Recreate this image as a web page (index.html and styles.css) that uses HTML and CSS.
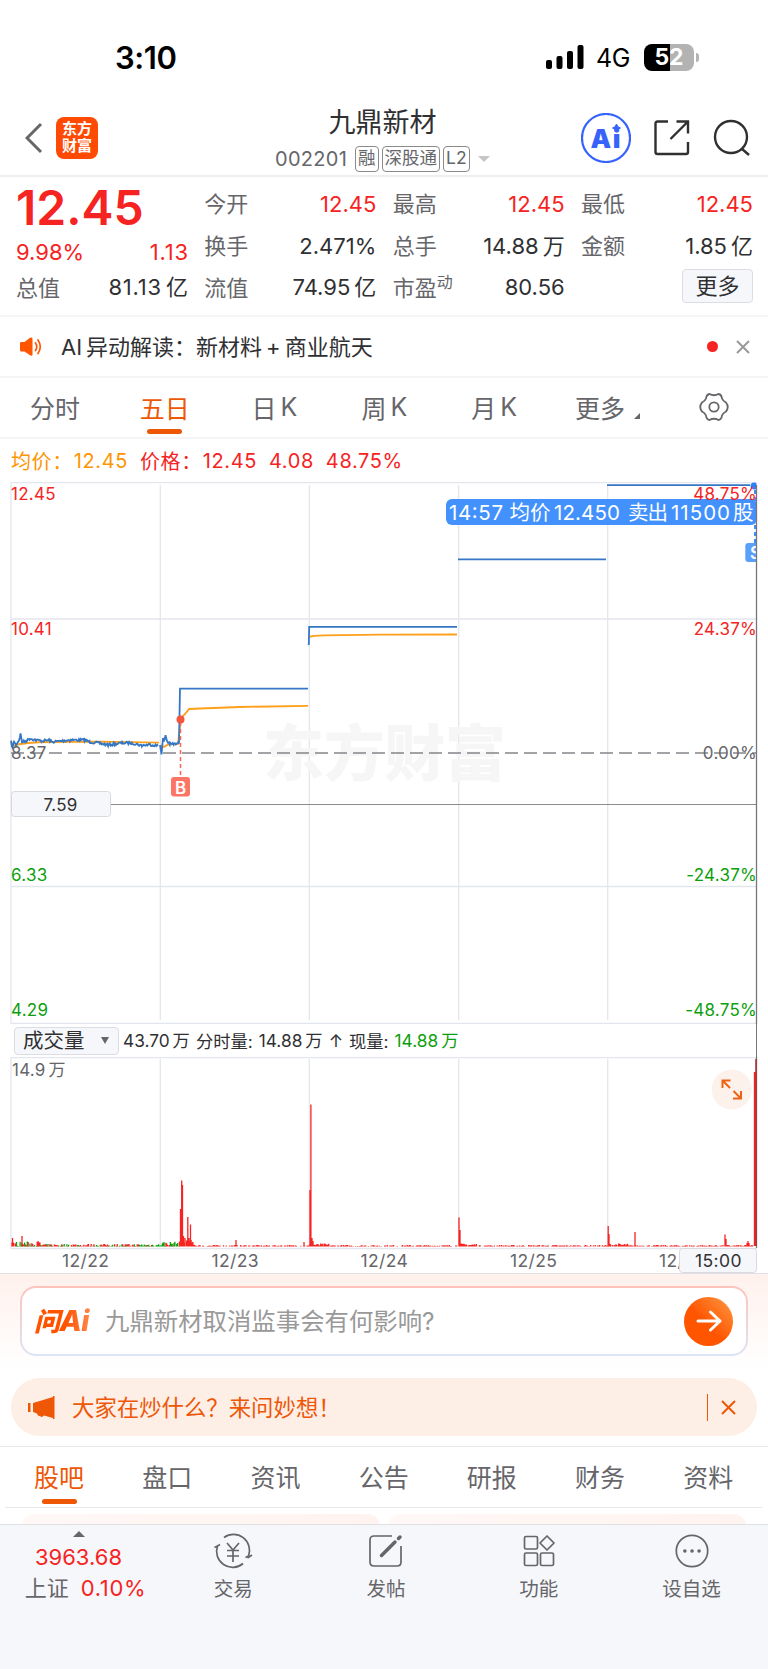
FILE: index.html
```html
<!DOCTYPE html>
<html lang="zh-CN">

<head>
    <meta charset="UTF-8">
    <meta name="viewport" content="width=device-width, initial-scale=1.0">
    <title>九鼎新材 002201</title>
    <link rel="stylesheet" href="styles.css">
</head>

<body>

    <!-- Status bar -->
    <div class="status-bar">
        <span class="clock">3:10</span>
        <div class="status-icons">
            <svg width="38" height="24" viewBox="0 0 38 24">
                <rect x="0" y="15" width="6" height="9" rx="2" />
                <rect x="10.5" y="11" width="6" height="13" rx="2" />
                <rect x="21" y="6" width="6" height="18" rx="2" />
                <rect x="31.5" y="0" width="6" height="24" rx="2" />
            </svg>
            <span class="network">4G</span>
            <span class="battery">52</span>
            <span class="battery-tip"></span>
        </div>
    </div>

    <!-- Header -->
    <header class="header">
        <div class="header-left">
            <svg class="back" width="18" height="32" viewBox="0 0 18 32">
                <path d="M16 2 L2 16 L16 30" />
            </svg>
            <div class="logo">东方<br>财富</div>
        </div>
        <div class="header-title">
            <h1>九鼎新材</h1>
            <div class="stock-code">
                <span class="code">002201</span>
                <span class="tag">融</span>
                <span class="tag">深股通</span>
                <span class="tag">L2</span>
                <span class="caret"></span>
            </div>
        </div>
        <div class="header-right">
            <svg width="50" height="50" viewBox="0 0 50 50">
                <circle cx="25" cy="25" r="24" fill="none" stroke="#3763fb" stroke-width="2.2" />
                <text class="ai-text" x="9.5" y="35" textLength="30">Ai</text>
                <path d="M35.500 11 Q36.300 14.200 39.500 15 Q36.300 15.800 35.500 19 Q34.700 15.800 31.500 15 Q34.700 14.200 35.500 11z" fill="#3763fb" stroke="#3763fb" />
            </svg>
            <svg class="line-icon share" width="38" height="38" viewBox="0 0 38 38">
                <path d="M15 2.500 H4.500 Q2.500 2.500 2.500 4.500 V33 Q2.500 35 4.500 35 H33 Q35 35 35 33 V23" />
                <path d="M23.500 2.500 H35 V14.500 M35 2.500 L17.500 20" />
            </svg>
            <svg class="line-icon" width="38" height="38" viewBox="0 0 38 38">
                <circle cx="18" cy="18" r="16" />
                <path d="M28.500 29.500 L36 36" />
            </svg>
        </div>
    </header>

    <!-- Quote -->
    <section class="quote">
        <div class="quote-col main-col">
            <div class="price">12.45</div>
            <div class="row change"><span>9.98%</span><span class="wide">1.13</span></div>
            <div class="row"><label>总值</label><span class="wide">81.13<i>亿</i></span></div>
        </div>
        <div class="quote-col">
            <div class="row red"><label>今开</label><span>12.45</span></div>
            <div class="row"><label>换手</label><span>2.471%</span></div>
            <div class="row"><label>流值</label><span>74.95<i>亿</i></span></div>
        </div>
        <div class="quote-col">
            <div class="row red"><label>最高</label><span>12.45</span></div>
            <div class="row"><label>总手</label><span>14.88<i>万</i></span></div>
            <div class="row"><label>市盈<sup>动</sup></label><span>80.56</span></div>
        </div>
        <div class="quote-col">
            <div class="row red"><label>最低</label><span>12.45</span></div>
            <div class="row"><label>金额</label><span>1.85<i>亿</i></span></div>
            <div class="row last"><button class="more-btn">更多</button></div>
        </div>
    </section>

    <!-- AI notice -->
    <section class="notice">
        <svg width="24" height="20" viewBox="0 0 24 20">
            <path d="M1 6 Q1 5 2.500 5 H5.500 L11 0.800 Q13.500 0 13.500 2 V17.500 Q13.500 19.500 11 18.300 L5.500 14.500 H2.500 Q1 14.500 1 13.500z" fill="#ff5500" />
            <path d="M16.500 6 Q19 9.700 16.500 13.500 M19 3 Q23.500 9.700 19 16.500" fill="none" stroke="#ff5500" stroke-width="1.700" stroke-linecap="round" />
        </svg>
        <p>AI<i>异动解读：新材料</i><i>+</i><i>商业航天</i></p>
        <span class="dot"></span>
        <svg class="close" width="14" height="14" viewBox="0 0 14 14">
            <path d="M1 1 L13 13 M13 1 L1 13" />
        </svg>
    </section>

    <!-- Period tabs -->
    <nav class="period-tabs">
        <a>分时</a>
        <a class="active">五日</a>
        <a>日<i>K</i></a>
        <a>周<i>K</i></a>
        <a>月<i>K</i></a>
        <a class="more-tab">更多<span class="corner"></span></a>
        <a class="gear">
            <svg width="30" height="30" viewBox="0 0 30 30">
                <path d="M10.500 2 Q15 4.500 19.500 2 Q22.500 2.500 23 6.500 Q24 9 27 10.500 Q30.500 15 27 19.500 Q24 21 23 23.500 Q22.500 27.500 19.500 28 Q15 25.500 10.500 28 Q7.500 27.500 7 23.500 Q6 21 3 19.500 Q-0.500 15 3 10.500 Q6 9 7 6.500 Q7.500 2.500 10.500 2z" />
                <circle cx="15" cy="15" r="4.700" />
            </svg>
        </a>
    </nav>

    <div class="legend">
        <span class="avg">均价：</span>
        <span class="avg avg-value">12.45</span>
        <span class="cur">价格：</span>
        <span>12.45</span>
        <span>4.08</span>
        <span>48.75%</span>
    </div>

    <!-- Price chart -->
    <svg class="chart" width="768" height="542" viewBox="0 482 768 542">
        <g class="grid">
            <path d="M11 482.500 H757 M11 619 H757 M11 886.500 H757 M11 1023.500 H757" />
            <path d="M11 482 V1024 M160.300 485 V1020 M309.300 485 V1020 M458.700 485 V1020 M607.700 485 V1020" />
        </g>
        <text class="watermark" x="263" y="776" textLength="243">东方财富</text>
        <path class="base-line" d="M11 753 H757" />
        <path class="avg-line" id="avgLine" />
        <path class="price-line" id="priceLine" />

        <!-- Buy marker -->
        <path class="buy-line" d="M180.500 722 V777" />
        <circle cx="180.500" cy="719.500" r="4" fill="#f4553f" />
        <rect x="171" y="777" width="19" height="19.500" rx="3" fill="#fd7565" />
        <text class="marker" x="180.500" y="793.500">B</text>

        <!-- Sell marker -->
        <clipPath id="chartClip"><rect x="0" y="482" width="756.500" height="542" /></clipPath>
        <g clip-path="url(#chartClip)">
            <rect x="745.300" y="543" width="19" height="19" rx="3" fill="#5a9ff9" />
            <text class="marker" x="755.500" y="559">S</text>
            <path d="M755 483 V543" stroke="#3d8ffb" stroke-width="2" stroke-dasharray="4 3" />
            <circle cx="754" cy="486" r="3.500" fill="#2d80f5" />
        </g>
        <path d="M110 804.500 H757" stroke="#8c8c8c" />
        <rect x="11.500" y="791.500" width="99" height="25" rx="3" fill="#f6f7fa" stroke="#d8dae0" />
        <text class="axis-label dark" x="43.500" y="811">7.59</text>

        <rect x="446" y="499" width="311" height="26" rx="6" fill="#4291fd" />
        <text class="tip" x="449" y="519.500" textLength="54">14:57</text>
        <text class="tip" x="509.500" y="519.500" textLength="41">均价</text>
        <text class="tip" x="554" y="519.500" textLength="66">12.450</text>
        <text class="tip" x="628" y="519.500" textLength="40">卖出</text>
        <text class="tip" x="671" y="519.500" textLength="59">11500</text>
        <text class="tip" x="733" y="519.500">股</text>

        <g class="axis-label">
            <text class="up" x="11" y="500">12.45</text>
            <text class="up" x="11" y="635">10.41</text>
            <text x="11" y="758.500">8.37</text>
            <text class="down" x="11" y="881">6.33</text>
            <text class="down" x="11" y="1016">4.29</text>
            <g text-anchor="end">
                <text class="up" x="757" y="500">48.75%</text>
                <text class="up" x="757" y="635">24.37%</text>
                <text x="757" y="758.500">0.00%</text>
                <text class="down" x="757" y="881">-24.37%</text>
                <text class="down" x="757" y="1016">-48.75%</text>
            </g>
        </g>
        <path class="cross-line" d="M756.500 485 V1024" />
    </svg>

    <div class="volume-bar">
        <button class="volume-select">成交量<span class="arrow"></span></button>
        <span>43.70<i>万</i></span>
        <span>分时量:</span>
        <span>14.88<i>万</i></span>
        <span>↑</span>
        <span>现量:</span>
        <span class="green">14.88<i>万</i></span>
    </div>

    <!-- Volume chart -->
    <svg class="chart" width="768" height="216" viewBox="0 1057 768 216">
        <g class="grid">
            <path d="M11 1057.500 H757 M11 1248.500 H757" stroke="#dcdce6" />
            <path d="M11 1057 V1249 M160.300 1059 V1246 M309.300 1059 V1246 M458.700 1059 V1246 M607.700 1059 V1246" />
        </g>
        <path id="volDown" stroke="#0d9f0d" stroke-width="1.300" />
        <path id="volUp" stroke="#f62323" stroke-width="1.300" />
        <path class="cross-line" d="M756.500 1057 V1248" />
        <path d="M754.800 1072 V1246" stroke="#f62323" stroke-width="2" />
        <path d="M756 1059 V1246" stroke="#b02a2a" stroke-width="1.500" />
        <g class="axis-label">
            <text x="12" y="1076">14.9</text>
            <text x="48.500" y="1076">万</text>
            <text class="date" x="62" y="1267">12/22</text>
            <text class="date" x="211.500" y="1267">12/23</text>
            <text class="date" x="360.500" y="1267">12/24</text>
            <text class="date" x="510" y="1267">12/25</text>
            <text class="date" x="659" y="1267">12/26</text>
        </g>
        <rect x="679.500" y="1248.500" width="77" height="24" rx="3" fill="#f6f7fa" stroke="#d8dae0" />
        <text class="axis-label date dark" x="695" y="1267">15:00</text>
        <circle cx="731.700" cy="1089.500" r="20" fill="#fdf1ec" />
        <path d="M722.500 1088 V1080.500 H730.500 M722.500 1080.500 L730 1088 M741 1091 V1098.500 H733 M741 1098.500 L733.500 1091" fill="none" stroke="#f0620f" stroke-width="2" />
    </svg>

    <!-- Ask AI -->
    <section class="ask">
        <div class="ask-box">
            <span class="ask-logo">问<b>Ai</b></span>
            <p>九鼎新材取消监事会有何影响?</p>
            <div class="ask-btn">
                <svg width="26" height="22" viewBox="0 0 26 22">
                    <path d="M2 11 H24 M14.500 2 L24 11 L14.500 20" />
                </svg>
            </div>
        </div>
        <div class="banner">
            <svg width="27" height="23" viewBox="0 0 27 23">
                <path d="M0 7 H2.500 V16 H0z M5 7 L25 1 V0 H26.500 V23 H25 V22 L16 19.500 L14 21 L10 19.500 L9 17.500 L5 16z" fill="#ee5706" />
            </svg>
            <p>大家在炒什么？来问妙想！</p>
            <span class="divider"></span>
            <svg class="close" width="15" height="15" viewBox="0 0 15 15">
                <path d="M1 1 L14 14 M14 1 L1 14" />
            </svg>
        </div>
    </section>

    <!-- Info tabs -->
    <nav class="info-tabs">
        <a class="active">股吧</a>
        <a>盘口</a>
        <a>资讯</a>
        <a>公告</a>
        <a>研报</a>
        <a>财务</a>
        <a>资料</a>
    </nav>
    <div class="cards">
        <div class="card"></div>
        <div class="card"></div>
    </div>

    <!-- Bottom bar -->
    <footer class="bottom-bar">
        <div class="index">
            <span class="up-arrow"></span>
            <div class="index-value">3963.68</div>
            <div class="index-change"><span>上证</span><span class="pct">0.10%</span></div>
        </div>
        <div class="action">
            <svg width="40" height="36" viewBox="0 0 40 36">
                <path d="M11 4.500 A16 16 0 0 1 35.500 23 M35.500 23 L32.500 24.500 M34.500 25 L39 22 M30 30.500 A16 16 0 0 1 4.500 13 L1.500 14.500 M4.500 13 L7 11.500" />
                <path d="M14 10 L20 17 L26 10 M14 17.500 H26 M14 23 H26 M20 17 V29" />
            </svg>
            <span>交易</span>
        </div>
        <div class="action">
            <svg width="40" height="36" viewBox="0 0 40 36">
                <path d="M26 3 H8 Q4 3 4 7 V29 Q4 33 8 33 H31 Q35 33 35 29 V13" />
                <path d="M15.500 22.500 L29 9 M32.500 5.500 L34 4" stroke-width="3.500" stroke-linecap="round" />
            </svg>
            <span>发帖</span>
        </div>
        <div class="action">
            <svg width="40" height="36" viewBox="0 0 40 36">
                <rect x="5.500" y="3.500" width="13" height="12.500" rx="1.500" />
                <rect x="5.500" y="20" width="13" height="12.500" rx="1.500" />
                <rect x="21.500" y="20" width="13" height="12.500" rx="1.500" />
                <path d="M28 3 L35 10 L28 17 L21 10z" stroke-linejoin="round" />
            </svg>
            <span>功能</span>
        </div>
        <div class="action">
            <svg width="40" height="36" viewBox="0 0 40 36">
                <circle cx="20" cy="18" r="15.700" />
                <path d="M12.800 18 h0.100 M20 18 h0.100 M27 18 h0.100" stroke-width="3.500" stroke-linecap="round" />
            </svg>
            <span>设自选</span>
        </div>
    </footer>

    <script src="script.js"></script>
</body>

</html>
```
FILE: styles.css
```css
body {
    font-family: Inter, "Noto Sans CJK SC", sans-serif;
    background-color: #fff;
    color: #303033;
    margin: 0;
    padding: 0;
    width: 768px;
    height: 1669px;
    overflow: hidden;
    display: flex;
    flex-direction: column;
}

* {
    box-sizing: border-box;
}

h1,
p {
    margin: 0;
    font-weight: normal;
}

i {
    font-style: normal;
    line-height: 0;
    margin-left: 4px;
}

svg {
    display: block;
    flex: none;
}

button {
    font-family: inherit;
    padding: 0;
}

/* Status bar */
.status-bar {
    height: 100px;
    flex: none;
    padding: 14px 69px 0 115px;
    display: flex;
    align-items: center;
    justify-content: space-between;
    color: #000;
}

.clock {
    font-size: 31px;
    font-weight: 600;
    letter-spacing: -0.4px;
}

.status-icons {
    display: flex;
    align-items: center;
}

.network {
    font-size: 25px;
    margin: 1px 13px 0 12px;
    letter-spacing: -0.5px;
    width: 35px;
}

.battery {
    width: 50px;
    height: 27px;
    border-radius: 8px;
    background: linear-gradient(to right, #000 52%, #b3b3b3 52%);
    color: #fff;
    font-size: 23px;
    font-weight: 700;
    line-height: 27px;
    text-align: center;
}

.battery-tip {
    width: 3px;
    height: 9px;
    margin-left: 2px;
    border-radius: 0 4px 4px 0;
    background-color: #b3b3b3;
}

/* Header */
.header {
    height: 77px;
    flex: none;
    border-bottom: 2px solid #eeeeef;
    padding: 0 16px 0 25px;
    display: grid;
    grid-template-columns: 200px 1fr 175px;
}

.header-left {
    display: flex;
    align-items: center;
    gap: 13px;
}

.back path {
    fill: none;
    stroke: #666;
    stroke-width: 3;
}

.logo {
    width: 42px;
    height: 42px;
    border-radius: 8px;
    background-color: #ff4a04;
    color: #fff;
    font-size: 15px;
    font-weight: 700;
    line-height: 17px;
    text-align: center;
    padding-top: 3px;
}

.header-title {
    display: flex;
    flex-direction: column;
    padding: 6px 0 0 50px;
}

.header-title h1 {
    font-size: 27px;
    line-height: 34px;
    padding-left: 53.5px;
}

.stock-code {
    display: flex;
    align-items: center;
    color: #66666a;
    font-size: 20px;
    margin-top: 6px;
    gap: 3px;
    white-space: nowrap;
}

.code {
    width: 77px;
    letter-spacing: 0.3px;
}

.tag {
    border: 1.5px solid #8a8a8a;
    border-radius: 4px;
    font-size: 17.5px;
    line-height: 22px;
    height: 26px;
    padding: 0 2px;
}

.caret {
    border: 6px solid transparent;
    border-top-color: #c6c6c8;
    border-bottom: none;
    margin-left: 5px;
}

.header-right {
    display: flex;
    align-items: center;
    margin-left: 4px;
}

.ai-text {
    font-size: 26px;
    font-weight: 900;
    fill: #3763fb;
}

.line-icon {
    fill: none;
    stroke: #303033;
    stroke-width: 2.4;
}

.share {
    margin: 0 22px;
}

/* Quote */
.quote {
    height: 140px;
    flex: none;
    border-bottom: 2px solid #f5f5f7;
    padding: 6px 15px 0 16px;
    display: grid;
    grid-template-columns: repeat(4, 172px);
    justify-content: space-between;
}

.row {
    height: 41.7px;
    display: flex;
    align-items: center;
    justify-content: space-between;
    font-size: 22px;
}

.row label {
    color: #66666a;
    margin-top: -3px;
}

.row.red span,
.row.change,
.price {
    color: #f62323;
}

.row sup {
    font-size: 16px;
    line-height: 0;
}

.row .wide {
    letter-spacing: 0.8px;
    margin-right: -0.8px;
}

.price {
    font-size: 48px;
    font-weight: 600;
    height: 48px;
    line-height: 49px;
}

.row.change {
    height: 35.4px;
    padding-top: 6px;
}

.row.last {
    justify-content: flex-end;
}

.more-btn {
    width: 71px;
    height: 34px;
    margin-top: -3px;
    border: 1.5px solid #dcdde3;
    border-radius: 4px;
    background-color: #f6f7fa;
    color: #303033;
    font-size: 22px;
    line-height: 28px;
}

/* AI notice */
.notice {
    height: 61px;
    flex: none;
    border-bottom: 2px solid #f5f5f7;
    padding: 0 18px 0 19px;
    display: flex;
    align-items: center;
    font-size: 22px;
}

.notice p {
    margin-left: 18px;
    flex: 1;
}

.dot {
    width: 11px;
    height: 11px;
    border-radius: 50%;
    background-color: #f62323;
}

.close {
    margin-left: 18px;
    fill: none;
    stroke: #999;
    stroke-width: 2;
}

/* Period tabs */
.period-tabs {
    height: 61px;
    flex: none;
    border-bottom: 2px solid #f5f5f7;
    display: grid;
    grid-template-columns: repeat(7, 109.8px);
    font-size: 25px;
    color: #66666a;
}

.period-tabs a,
.info-tabs a {
    display: flex;
    align-items: center;
    justify-content: center;
    position: relative;
}

.period-tabs a {
    padding-bottom: 2px;
}

.active {
    color: #ee5706;
}

.active::after {
    content: "";
    position: absolute;
    bottom: 3.5px;
    width: 35px;
    height: 5px;
    border-radius: 2.5px;
    background-color: #ee5706;
}

.more-tab {
    padding-left: 7px;
}

.corner {
    border: 3.5px solid #66666a;
    border-top-color: transparent;
    border-left-color: transparent;
    margin: 19px 0 0 9px;
}

.gear svg {
    fill: none;
    stroke: #66666a;
    stroke-width: 1.8;
}

/* Legend */
.legend {
    height: 43px;
    flex: none;
    padding-left: 11px;
    display: flex;
    align-items: center;
    font-size: 20px;
    letter-spacing: 0.6px;
    color: #f62323;
    gap: 12px;
}

.avg {
    color: #ff9500;
}

.avg-value {
    margin-left: -11px;
}

.cur {
    margin-right: -11px;
}

/* Charts */
.chart path {
    fill: none;
}

.grid path {
    stroke: #e4e6ed;
    stroke-width: 1.3;
}

.watermark {
    font-size: 61px;
    font-weight: 900;
    fill: #f6f6f6;
}

.base-line {
    stroke: #85858a;
    stroke-width: 1.5;
    stroke-dasharray: 13 6;
}

.avg-line {
    stroke: #ff9f1a;
    stroke-width: 1.8;
}

.price-line {
    stroke: #3577c4;
    stroke-width: 1.8;
}

.buy-line {
    stroke: #fd6552;
    stroke-width: 1.5;
    stroke-dasharray: 4 3;
}

.marker {
    font-size: 17px;
    font-weight: 600;
    fill: #fff;
    text-anchor: middle;
}

.axis-label {
    font-size: 17px;
    letter-spacing: 0.25px;
    fill: #66666a;
}

.axis-label .date,
.date {
    font-size: 17.5px;
    letter-spacing: 0.4px;
}

.dark {
    fill: #303033;
}

.up {
    fill: #f62323;
}

.down {
    fill: #0d9f0d;
}

.tip {
    font-size: 20.5px;
    fill: #fff;
}

.cross-line {
    stroke: #77777a;
    stroke-width: 1.3;
}

.volume-bar {
    height: 33px;
    flex: none;
    margin-right: 11px;
    border-right: 1.3px solid #77777a;
    padding-left: 14px;
    display: flex;
    align-items: center;
    gap: 6px;
    font-size: 17.3px;
    white-space: nowrap;
}

.volume-bar i {
    margin-left: 3px;
}

.volume-select {
    width: 105px;
    height: 28px;
    border: 1.5px solid #dcdde3;
    border-radius: 4px;
    background-color: #f6f7fa;
    color: #303033;
    font-size: 20.5px;
    line-height: 24px;
    padding: 0 9px 0 8px;
    display: flex;
    align-items: center;
    justify-content: space-between;
    margin-right: -2px;
}

.arrow {
    border: 4px solid transparent;
    border-top: 7px solid #66666a;
    border-bottom: none;
}

.green {
    color: #0d9f0d;
}

/* Ask AI */
.ask {
    height: 173px;
    flex: none;
    border-top: 1px solid #e0e1e8;
    background: linear-gradient(#fff1ec, #fff 96px);
    padding: 12px 11px 0;
}

.ask-box {
    height: 70px;
    margin: 0 9px;
    border: 2px solid transparent;
    border-radius: 16px;
    background: linear-gradient(#fff, #fff) padding-box, linear-gradient(#ffc2ba, #dde4f6) border-box;
    padding: 0 13px;
    display: flex;
    align-items: center;
}

.ask-logo {
    font-size: 26px;
    font-weight: 900;
    font-style: italic;
    width: 58px;
    margin: -3px 0 0 -1px;
    white-space: nowrap;
    letter-spacing: -0.5px;
    background: linear-gradient(to right, #ff5300 55%, #ff8a50);
    background-clip: text;
    color: transparent;
}

.ask-logo b {
    font-size: 29px;
    font-weight: 800;
    line-height: 30px;
}

.ask-box p {
    font-size: 24.4px;
    color: #999;
    margin: -4px 0 0 13px;
    flex: 1;
}

.ask-btn {
    width: 49px;
    height: 49px;
    border-radius: 50%;
    background: linear-gradient(45deg, #ff5500 45%, #ff9a45);
    display: flex;
    align-items: center;
    justify-content: center;
}

.ask-btn path {
    fill: none;
    stroke: #fff;
    stroke-width: 3;
    stroke-linecap: round;
    stroke-linejoin: round;
}

.banner {
    height: 58px;
    margin-top: 22px;
    padding: 0 21px 0 17px;
    border-radius: 29px;
    background-color: #fdeee6;
    color: #ee5706;
    display: flex;
    align-items: center;
    font-size: 22.4px;
}

.banner p {
    margin: -3px 0 0 17px;
    flex: 1;
}

.divider {
    width: 1.5px;
    height: 27px;
    background-color: #ee5706;
}

.banner .close {
    margin-left: 13px;
    stroke: #ee5706;
}

/* Info tabs */
.info-tabs {
    height: 62px;
    flex: none;
    border-top: 1.5px solid #e8e8ec;
    padding: 0 5px;
    display: grid;
    grid-template-columns: repeat(7, 108.2px);
    font-size: 25px;
    color: #66666a;
}

.info-tabs a {
    border-bottom: 1.5px solid #e8e8ec;
    padding-bottom: 3px;
}

.info-tabs .active::after {
    bottom: 3px;
}

.cards {
    height: 16px;
    flex: none;
    padding: 6px 22px 0;
    display: grid;
    grid-template-columns: 1fr 1fr;
    gap: 8px;
    overflow: hidden;
}

.card {
    height: 30px;
    border-radius: 12px;
    background: linear-gradient(to right, #fff8f6, #fff3f0);
}

/* Bottom bar */
.bottom-bar {
    flex: 1;
    border-top: 1.5px solid #dfe0e4;
    background-color: #f6f7fa;
    display: grid;
    grid-template-columns: 157px repeat(4, 152.75px);
    color: #66666a;
}

.index {
    display: flex;
    flex-direction: column;
    align-items: center;
    font-size: 22px;
}

.up-arrow {
    border: 6px solid transparent;
    border-bottom-color: #66666a;
    border-top: none;
    margin-top: 6px;
}

.index-value {
    color: #f62323;
    line-height: 30px;
    margin-top: 5px;
}

.index-change {
    display: flex;
    gap: 12px;
    line-height: 30px;
    margin: 1px 0 0 14px;
}

.pct {
    color: #f62323;
    letter-spacing: 0.7px;
}

.action {
    display: flex;
    flex-direction: column;
    align-items: center;
    padding-top: 8px;
    font-size: 19.5px;
    line-height: 28px;
    gap: 6px;
}

.action svg {
    fill: none;
    stroke: #66666a;
    stroke-width: 1.7;
}
```
FILE: script.js
```js
// Small repeatable generator for the minute noise
let seed = 7;
function rand() {
    seed = (seed * 16807) % 2147483647;
    return seed / 2147483647;
}

// Walk between key points and add some jitter to every minute
function minuteLine(points, jitter) {
    let d = "";
    for (let i = 0; i < points.length - 1; i++) {
        const [x1, y1] = points[i];
        const [x2, y2] = points[i + 1];
        for (let x = x1; x < x2; x += 0.9) {
            const y = y1 + (y2 - y1) * (x - x1) / (x2 - x1) + (rand() - 0.5) * jitter;
            d += (d ? "L" : "M") + x.toFixed(1) + " " + y.toFixed(1);
        }
    }
    return d;
}

const dayOne = [[11, 742], [12.5, 748], [14, 741], [16, 745], [19, 740], [20.5, 734], [22, 742], [26, 741],
    [30, 738.5], [36, 740], [42, 741], [49, 740], [52, 742], [60, 741], [70, 740], [85, 740], [90, 742], [98, 743],
    [108, 745], [115, 744], [122, 743], [132, 743], [142, 745.5], [150, 744.5], [159, 746]];
const dayTwo = [[160, 745], [161.5, 753], [163, 739], [164, 742], [165.5, 735], [167, 741], [170, 744], [174, 744], [178, 744]];

document.getElementById("priceLine").setAttribute("d",
    minuteLine(dayOne, 2.6) + minuteLine(dayTwo, 3) +
    "L179 743 L180 688.6 H308 M308.8 645 L309.2 626.8 H457 M458 559.3 H606 M607 485.2 H750");
document.getElementById("avgLine").setAttribute("d",
    "M11 746 C22 743 30 742 50 742 L100 741.6 L159 742.7 M161 745 L164 747 L168 744.5 L178 744 L181 718 L186 713 L189 709 L200 708.5 L240 707 L308 705.8" +
    " M309 637 Q312 635.5 325 635.3 L380 634.7 L457 634.5");

// Volume spikes: x, top
const spikes = [[12.5, 1238], [22, 1236], [38, 1241], [180.5, 1209], [181.7, 1180.5], [182.5, 1185], [183.5, 1236], [185, 1238],
    [187.8, 1217], [189, 1238], [190.5, 1224.5], [236, 1240], [304, 1242], [310, 1190], [310.9, 1104.5], [312, 1238], [313, 1241],
    [459, 1217.5], [460, 1230], [608.2, 1226], [609, 1234], [635, 1232], [725, 1234.5], [726, 1239], [748, 1241], [747, 1243], [749, 1243]];
const base = 1246.5;
let upPath = spikes.map(s => `M${s[0]} ${base} V${s[1]}`).join("");
let downPath = "";
for (let x = 12; x < 753; x += 0.9) {
    const early = x < 40;
    const dayStart = (x - 11) % 149.3 < 20;
    let h = rand() * (early ? 5 : x < 160 ? 2.6 : x < 180 ? 5 : x < 195 ? 7 : dayStart ? 3 : 1.5);
    const bar = `M${x.toFixed(1)} ${base} v${-h.toFixed(1)}`;
    if (x < 180 && rand() < (x > 140 ? 0.8 : 0.5)) {
        downPath += bar;
    } else if (h > 0.5) {
        upPath += bar;
    }
}
document.getElementById("volUp").setAttribute("d", upPath);
document.getElementById("volDown").setAttribute("d", downPath);
```
